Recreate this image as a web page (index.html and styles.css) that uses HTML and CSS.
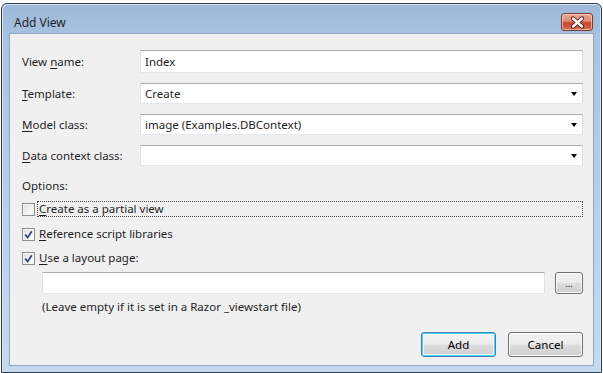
FILE: index.html
```html
<!DOCTYPE html>
<html>
<head>
<meta charset="utf-8">
<link rel="stylesheet" href="styles.css">
</head>
<body>
<div class="window">
  <div class="titlebar">
    <span class="title">Add View</span>
    <div class="close">
      <svg width="31" height="17" viewBox="0 0 31 17">
        <path d="M11 4.5 L20 12.5 M20 4.5 L11 12.5" stroke="#4a1a14" stroke-width="4.2" stroke-linecap="round"/>
        <path d="M11 4.5 L20 12.5 M20 4.5 L11 12.5" stroke="#ffffff" stroke-width="2.4" stroke-linecap="round"/>
      </svg>
    </div>
  </div>
  <div class="client">
    <div class="form">
      <label class="lbl"><span>View <u>n</u>ame:</span></label>
      <div class="textbox first">Index</div>
      <label class="lbl"><span><u>T</u>emplate:</span></label>
      <div class="combo"><span>Create</span><i class="arrow"></i></div>
      <label class="lbl"><span><u>M</u>odel class:</span></label>
      <div class="combo"><span>image (Examples.DBContext)</span><i class="arrow"></i></div>
      <label class="lbl"><span><u>D</u>ata context class:</span></label>
      <div class="combo"><span></span><i class="arrow"></i></div>
    </div>
    <div class="options">Options:</div>
    <div class="check row1 focused">
      <span class="box"></span><span class="ctext"><u>C</u>reate as a partial view</span>
    </div>
    <div class="check row2">
      <span class="box"><svg width="9" height="9" viewBox="0 0 9 9"><path d="M1.2 4.6 L3.6 7.4 L7.8 1.2" fill="none" stroke="#34498c" stroke-width="1.8"/></svg></span><span class="ctext"><u>R</u>eference script libraries</span>
    </div>
    <div class="check row3">
      <span class="box"><svg width="9" height="9" viewBox="0 0 9 9"><path d="M1.2 4.6 L3.6 7.4 L7.8 1.2" fill="none" stroke="#34498c" stroke-width="1.8"/></svg></span><span class="ctext"><u>U</u>se a layout page:</span>
    </div>
    <div class="layout-row">
      <div class="textbox wide"></div>
      <div class="btn browse">...</div>
    </div>
    <div class="hint">(Leave empty if it is set in a Razor _viewstart file)</div>
    <div class="buttons">
      <div class="btn default">Add</div>
      <div class="btn">Cancel</div>
    </div>
  </div>
</div>
</body>
</html>
```
FILE: styles.css
```css
html, body {
  margin: 0;
  padding: 0;
  background: #ffffff;
}
body {
  font-family: "Noto Sans", "Open Sans", sans-serif;
  font-size: 11.5px;
  color: #1e1e1e;
}
.window {
  margin: 3px 0 0 1px;
  width: 585px;
  height: 362px;
  border: 1px solid #2f3d4e;
  border-radius: 6px 6px 0 0;
  padding: 0 7px 6px 7px;
  background: linear-gradient(180deg, #9db8d8 0%, #a9c3e1 10%, #b9d1ea 60%, #c4daf0 100%);
  box-shadow: inset 1px 1px 0 #d6e4f4, inset -1px 0 0 #d6e4f4;
  display: flex;
  flex-direction: column;
}
.titlebar {
  height: 29px;
  display: flex;
  align-items: flex-start;
  justify-content: space-between;
}
.title {
  margin: 12px 0 0 5px;
  font-size: 12px;
  line-height: 14px;
  color: #22262b;
}
.close {
  margin: 9px 1px 0 0;
  width: 32px;
  height: 18px;
  border: 1px solid #7c3a33;
  border-radius: 3px;
  box-sizing: border-box;
  background: linear-gradient(180deg, #eba797 0%, #dd8a72 45%, #c7462c 55%, #d4704f 100%);
  box-shadow: inset 0 0 0 1px rgba(255, 220, 210, 0.6);
  display: flex;
  align-items: center;
  justify-content: center;
  overflow: hidden;
}
.close svg {
  display: block;
  flex: none;
}
.client {
  flex: 1;
  background: #f0f0f0;
  border: 1px solid #8ea6c3;
  padding: 16px 10px 0 12px;
  display: flex;
  flex-direction: column;
}
.form {
  display: grid;
  grid-template-columns: 118px 443px;
  grid-template-rows: 23px 21px 21px 21px;
  row-gap: 10px;
}
.lbl {
  display: flex;
  align-items: center;
}
.textbox, .combo {
  box-sizing: border-box;
  background: #ffffff;
  border: 1px solid #e2e3ea;
  border-top-color: #abadb3;
  border-left-color: #e2e3ea;
  border-right-color: #dbdfe6;
  border-bottom-color: #e3e9ef;
  display: flex;
  align-items: center;
  padding: 0 4px;
  height: 100%;
}
.combo {
  justify-content: space-between;
  padding-right: 5px;
}
.arrow {
  width: 0;
  height: 0;
  border-left: 3.5px solid transparent;
  border-right: 3.5px solid transparent;
  border-top: 4px solid #000000;
  margin-top: 1px;
}
.options {
  margin-top: 12px;
  height: 16px;
  line-height: 16px;
}
.check {
  display: flex;
  align-items: center;
  height: 16px;
  line-height: 16px;
}
.row1 { margin-top: 7px; }
.row2 { margin-top: 9px; }
.row3 { margin-top: 8px; }
.box {
  box-sizing: border-box;
  width: 13px;
  height: 13px;
  border: 1px solid #8f8f8f;
  background: linear-gradient(135deg, #dcdcdc 0%, #f4f4f4 60%, #ffffff 100%);
  box-shadow: inset 0 0 0 1px #f4f4f4;
  display: flex;
  align-items: center;
  justify-content: center;
  flex: none;
}
.box svg { display: block; }
.ctext {
  margin-left: 3px;
  padding: 0 1px;
}
.focused .ctext {
  flex: 1;
  border: 1px dotted #444;
  margin-left: 2px;
  height: 14px;
  line-height: 14px;
}
.layout-row {
  margin-top: 6px;
  margin-left: 20px;
  display: flex;
  gap: 10px;
  height: 22px;
}
.wide {
  width: 504px;
}
.btn {
  box-sizing: border-box;
  border: 1px solid #707070;
  border-radius: 3px;
  background: linear-gradient(180deg, #f2f2f2 0%, #ebebeb 48%, #dddddd 52%, #cfcfcf 100%);
  box-shadow: inset 0 0 0 1px #fcfcfc;
  display: flex;
  align-items: center;
  justify-content: center;
  color: #000;
}
.browse {
  width: 28px;
  height: 22px;
  font-size: 9px;
  line-height: 9px;
}
.hint {
  margin-top: 5px;
  margin-left: 20px;
  height: 16px;
  line-height: 16px;
}
.buttons {
  margin-top: 17px;
  display: flex;
  justify-content: flex-end;
  gap: 12px;
  margin-right: 0;
}
.buttons .btn {
  width: 75px;
  height: 25px;
}
.btn.default {
  border-color: #3c7fb1;
  box-shadow: inset 0 0 0 1px #48d8fb, inset 0 0 0 2px #f4f4f4;
}
u { text-decoration: underline; text-underline-offset: 2px; }
```
